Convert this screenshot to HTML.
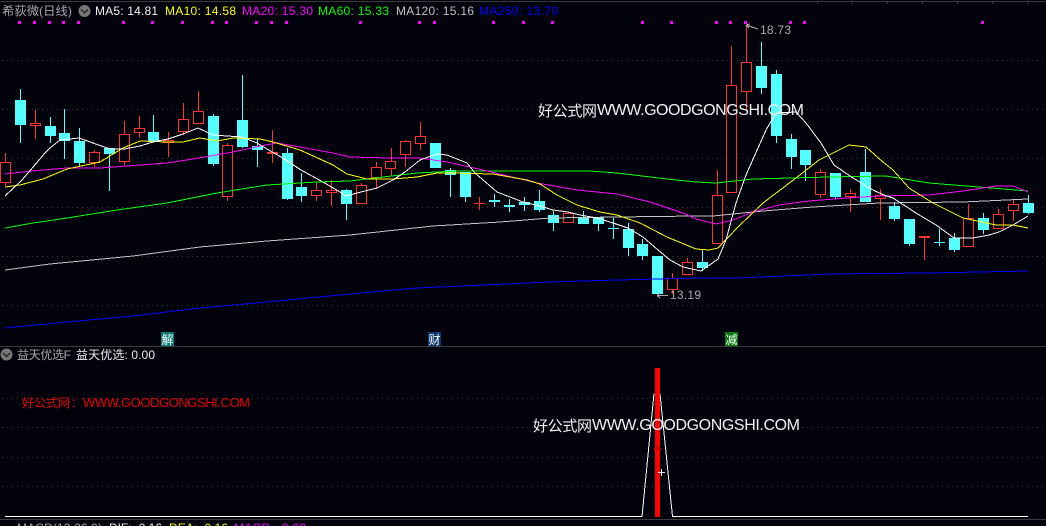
<!DOCTYPE html>
<html><head><meta charset="utf-8"><style>
html,body{margin:0;padding:0;background:#02020c;width:1046px;height:526px;overflow:hidden}
svg{display:block;position:absolute;left:0;top:0}
text{font-family:"Liberation Sans","Noto Sans CJK SC",sans-serif;font-size:12px}
</style></head><body>
<svg width="1046" height="526" viewBox="0 0 1046 526" xmlns="http://www.w3.org/2000/svg">
<rect width="1046" height="526" fill="#02020c"/>
<g shape-rendering="crispEdges">
<path d="M0 1.5H1046M0 346.5H1046M0 519.5H1046" stroke="#3c3c3c" fill="none"/>
<path d="M817.5 2V4M852.5 2V4M887.5 2V4M922.5 2V4M957.5 2V4M992.5 2V4M1027.5 2V4" stroke="#3c3c3c" fill="none"/>
<path d="M2 60.5H1046M2 109.5H1046M2 158.5H1046M2 207.5H1046M2 256.5H1046M2 305.5H1046M2 398.5H1046M2 427.5H1046M2 457.5H1046M2 486.5H1046" stroke="#3a3a3a" stroke-dasharray="1 4" fill="none"/>
<path fill="#f0f" d="M18 21h3v3h-3zM33 21h3v3h-3zM48 21h3v3h-3zM62 21h3v3h-3zM77 21h3v3h-3zM122 21h3v3h-3zM151 21h3v3h-3zM181 21h3v3h-3zM211 21h3v3h-3zM225 21h3v3h-3zM255 21h3v3h-3zM270 21h3v3h-3zM285 21h3v3h-3zM359 21h3v3h-3zM418 21h3v3h-3zM433 21h3v3h-3zM492 21h3v3h-3zM522 21h3v3h-3zM551 21h3v3h-3zM641 21h3v3h-3zM670 21h3v3h-3zM715 21h3v3h-3zM729 21h3v3h-3zM744 21h3v3h-3zM789 21h3v3h-3zM803 21h3v3h-3zM981 21h3v3h-3z"/>
<!-- cyan candles -->
<path fill="#54ffff" d="M15 100h11v25h-11zM20 89h1v54h-1zM45 126h11v10h-11zM50 117h1v26h-1zM59 133h11v8h-11zM64 109h1v50h-1zM74 141h11v22h-11zM79 128h1v38h-1zM104 148h11v6h-11zM109 148h1v43h-1zM148 132h11v9h-11zM153 115h1v26h-1zM208 116h11v48h-11zM213 114h1v52h-1zM237 120h11v27h-11zM242 75h1v73h-1zM252 146h11v4h-11zM257 138h1v29h-1zM282 153h11v46h-11zM287 148h1v52h-1zM296 187h11v9h-11zM301 173h1v29h-1zM341 190h11v14h-11zM346 189h1v31h-1zM430 143h11v25h-11zM445 170h11v5h-11zM450 168h1v29h-1zM460 172h11v25h-11zM465 172h1v30h-1zM489 200h11v2h-11zM494 194h1v13h-1zM504 205h11v2h-11zM509 199h1v13h-1zM519 202h11v3h-11zM524 197h1v14h-1zM534 201h11v9h-11zM539 190h1v22h-1zM548 215h11v8h-11zM553 211h1v20h-1zM578 217h11v7h-11zM583 211h1v13h-1zM593 217h11v7h-11zM598 217h1v14h-1zM608 228h11v1h-11zM613 218h1v21h-1zM623 229h11v19h-11zM628 223h1v33h-1zM637 244h11v12h-11zM642 239h1v21h-1zM652 256h11v38h-11zM697 262h11v6h-11zM702 250h1v21h-1zM756 66h11v22h-11zM761 42h1v52h-1zM771 74h11v62h-11zM776 70h1v73h-1zM786 139h11v18h-11zM791 134h1v35h-1zM800 150h11v15h-11zM805 150h1v31h-1zM830 173h11v24h-11zM835 173h1v26h-1zM860 172h11v30h-11zM865 149h1v53h-1zM889 206h11v13h-11zM894 202h1v19h-1zM904 219h11v25h-11zM909 219h1v27h-1zM934 242h11v1h-11zM939 229h1v17h-1zM949 238h11v12h-11zM954 233h1v19h-1zM978 218h11v12h-11zM983 213h1v21h-1zM1023 203h11v10h-11zM1028 195h1v19h-1z"/>
<!-- red wicks -->
<path stroke="#ff3232" fill="none" d="M5.500 153V186M35.500 110V139M94.500 150V167M124.500 121V165M139.500 116V138M168.500 132V157M183.500 103V135M198.500 91V124M227.500 143V201M272.500 130V163M316.500 182V201M331.500 180V206M361.500 183V204M376.500 162V189M391.500 148V176M405.500 140V167M420.500 122V150M479.500 197V210M474 203.500H485M568.500 212V223M672.500 273V294M687.500 258V275M717.500 170V244M731.500 46V193M746.500 25V110M820.500 169V198M850.500 189V212M880.500 189V220M924.500 236V260M968.500 204V247M998.500 209V229M1013.500 200V221"/>
<!-- red bodies -->
<g fill="#02020c" stroke="#ff3232">
<rect x="0.500" y="162.500" width="10" height="20"/>
<rect x="30.500" y="123.500" width="10" height="2"/>
<rect x="89.500" y="152.500" width="10" height="10"/>
<rect x="119.500" y="134.500" width="10" height="27"/>
<rect x="134.500" y="128.500" width="10" height="4"/>
<rect x="163.500" y="140.500" width="10" height="2"/>
<rect x="178.500" y="119.500" width="10" height="12"/>
<rect x="193.500" y="111.500" width="10" height="12"/>
<rect x="222.500" y="145.500" width="10" height="51"/>
<rect x="267.500" y="152.500" width="10" height="1"/>
<rect x="311.500" y="190.500" width="10" height="5"/>
<rect x="326.500" y="190.500" width="10" height="2"/>
<rect x="356.500" y="185.500" width="10" height="18"/>
<rect x="371.500" y="167.500" width="10" height="10"/>
<rect x="385.500" y="161.500" width="10" height="7"/>
<rect x="400.500" y="141.500" width="10" height="13"/>
<rect x="415.500" y="136.500" width="10" height="7"/>
<rect x="563.500" y="213.500" width="10" height="9"/>
<rect x="667.500" y="278.500" width="10" height="11"/>
<rect x="682.500" y="262.500" width="10" height="12"/>
<rect x="712.500" y="195.500" width="10" height="48"/>
<rect x="726.500" y="85.500" width="10" height="107"/>
<rect x="741.500" y="62.500" width="10" height="29"/>
<rect x="815.500" y="172.500" width="10" height="22"/>
<rect x="845.500" y="193.500" width="10" height="3"/>
<rect x="875.500" y="195.500" width="10" height="3"/>
<rect x="919.500" y="236.500" width="10" height="1"/>
<rect x="963.500" y="218.500" width="10" height="28"/>
<rect x="993.500" y="214.500" width="10" height="14"/>
<rect x="1008.500" y="204.500" width="10" height="6"/>
</g>
<!-- moving averages -->
<g fill="none">
<polyline stroke="#0000ff" points="5,328 67,322 133,316 200,308 267,302 350,294 417,288 483,285 550,282 617,280 700,278 739,278 829,274 929,273 1028,271"/>
<polyline stroke="#c4c4c4" points="5,270 50,264 133,256 200,247 267,241 350,235 433,226 500,222 550,218 617,217 696,216 713,216 763,211 813,207 879,203 963,202 1028,199"/>
<polyline stroke="#00ff00" points="5,228 33,223 67,218 117,210 167,203 217,193 267,185 317,182 350,181 383,177 417,173 457,171 590,171 617,173 667,179 696,182 716,183 753,179 829,177 886,176 929,183 979,187 1028,191"/>
<polyline stroke="#ff00ff" points="5,174 23,172 43,170 67,168 100,168 127,166 167,163 193,159 233,152 260,146 277,143 300,147 333,153 350,157 390,158 420,158 447,162 483,170 537,183 577,190 617,194 650,202 683,213 696,219 716,224 733,220 753,212 779,205 809,201 846,198 879,196 929,195 963,191 996,186 1013,186 1028,192"/>
<polyline stroke="#ffff00" points="5,187 20,185 43,179 67,169 100,162 123,148 140,141 167,142 183,142 200,138 217,141 233,138 260,139 273,142 300,150 333,165 347,174 367,179 393,179 417,177 437,173 450,173 493,174 527,180 540,184 557,195 577,205 600,212 617,215 640,223 667,237 696,249 709,250 718,248 738,227 763,203 796,178 819,160 849,145 866,147 883,162 893,170 909,188 933,203 963,218 996,225 1013,225 1028,228"/>
<polyline stroke="#ffffff" points="5,196 22,180 45,153 50,148 60,140 79,138 93,143 110,149 124,149 140,146 153,142 168,139 183,134 198,128 213,135 227,136 242,137 257,143 272,152 283,158 301,170 323,182 340,192 346,196 357,193 377,188 393,180 405,172 420,160 437,154 447,155 467,163 475,173 497,192 510,197 523,202 540,206 553,210 568,212 580,215 597,218 613,223 628,228 643,237 658,250 670,260 683,267 701,271 718,259 726,240 736,203 746,175 766,130 776,113 796,112 806,123 821,143 834,165 853,178 873,190 884,195 893,198 916,213 936,225 954,238 973,238 989,235 999,232 1013,225 1028,216"/>
<!-- panel 2 -->
<path stroke="#fff" stroke-width="1" d="M5 516.500H642L654 393.500M660 393.500L672.500 516.500H1028"/>
</g>
<rect x="655" y="368" width="5" height="149" fill="#ff0000"/>
<path d="M653 450L657.500 445L662 450Z" fill="#d00000"/>
<path d="M661.500 469V476M658 472.500H665" stroke="#e8e8e8" fill="none"/>
<!-- badges -->
<rect x="161" y="332" width="13" height="14" fill="#0a7a78"/>
<rect x="428" y="332" width="13" height="14" fill="#0a3a6e"/>
<rect x="725" y="332" width="13" height="14" fill="#0a7a10"/>
<!-- arrows -->
<path d="M746 25L758 29M746 25L750 24M746 25L749 28M657 295.500H668M657 295.500L660 293M657 295.500L660 298" stroke="#aaaaaa" fill="none"/>
</g>
<!-- icons -->
<circle cx="84.500" cy="11" r="6" fill="#777"/><path d="M81 9.500L84.500 13L88 9.500" stroke="#222" stroke-width="1.300" fill="none"/>
<circle cx="6.500" cy="354.500" r="6" fill="#777"/><path d="M3 353L6.500 356.500L10 353" stroke="#222" stroke-width="1.300" fill="none"/>
<circle cx="7" cy="532" r="6" fill="#777"/>
<!-- header text -->
<text x="2" y="15" fill="#a8a8a8" textLength="70" lengthAdjust="spacingAndGlyphs">希荻微(日线)</text>
<text x="95" y="15" fill="#f0f0f0" textLength="63">MA5: 14.81</text>
<text x="165" y="15" fill="#ffff00" textLength="71">MA10: 14.58</text>
<text x="242" y="15" fill="#ff00ff" textLength="71">MA20: 15.30</text>
<text x="318" y="15" fill="#00ff00" textLength="71">MA60: 15.33</text>
<text x="396" y="15" fill="#c0c0c0" textLength="78">MA120: 15.16</text>
<text x="479" y="15" fill="#0000ff" textLength="79">MA250: 13.70</text>
<text x="760" y="34" fill="#aaaaaa" textLength="31">18.73</text>
<text x="670" y="299" fill="#aaaaaa" textLength="31">13.19</text>
<text x="538" y="116" fill="#f0f0f0" style="font-size:15px" textLength="59">好公式网</text>
<text x="597" y="115" fill="#f0f0f0" style="font-size:16px" textLength="207">WWW.GOODGONGSHI.COM</text>
<text x="533" y="431" fill="#f0f0f0" style="font-size:15px" textLength="59">好公式网</text>
<text x="592" y="430" fill="#f0f0f0" style="font-size:16px" textLength="208">WWW.GOODGONGSHI.COM</text>
<text x="22" y="407" fill="#e80000" style="font-size:12px" textLength="48">好公式网</text>
<text x="71" y="407" fill="#e80000" style="font-size:12px">：</text>
<text x="83" y="407" fill="#e80000" style="font-size:13px" textLength="167">WWW.GOODGONGSHI.COM</text>
<text x="161.500" y="344" fill="#fff" style="font-size:12px">解</text>
<text x="428.500" y="344" fill="#fff" style="font-size:12px">财</text>
<text x="725.500" y="344" fill="#fff" style="font-size:12px">减</text>
<text x="17" y="359" fill="#a8a8a8" textLength="54">益天优选F</text>
<text x="76" y="359" fill="#f0f0f0" textLength="79">益天优选: 0.00</text>
<text x="17" y="532" fill="#a8a8a8" textLength="85">MACD(12.26.9)</text>
<text x="109" y="532" fill="#f0f0f0" textLength="53">DIF: -0.16</text>
<text x="169" y="532" fill="#ffff00" textLength="59">DEA: -0.16</text>
<text x="234" y="532" fill="#ff00ff" textLength="72">MACD: -0.02</text>
</svg>
</body></html>
